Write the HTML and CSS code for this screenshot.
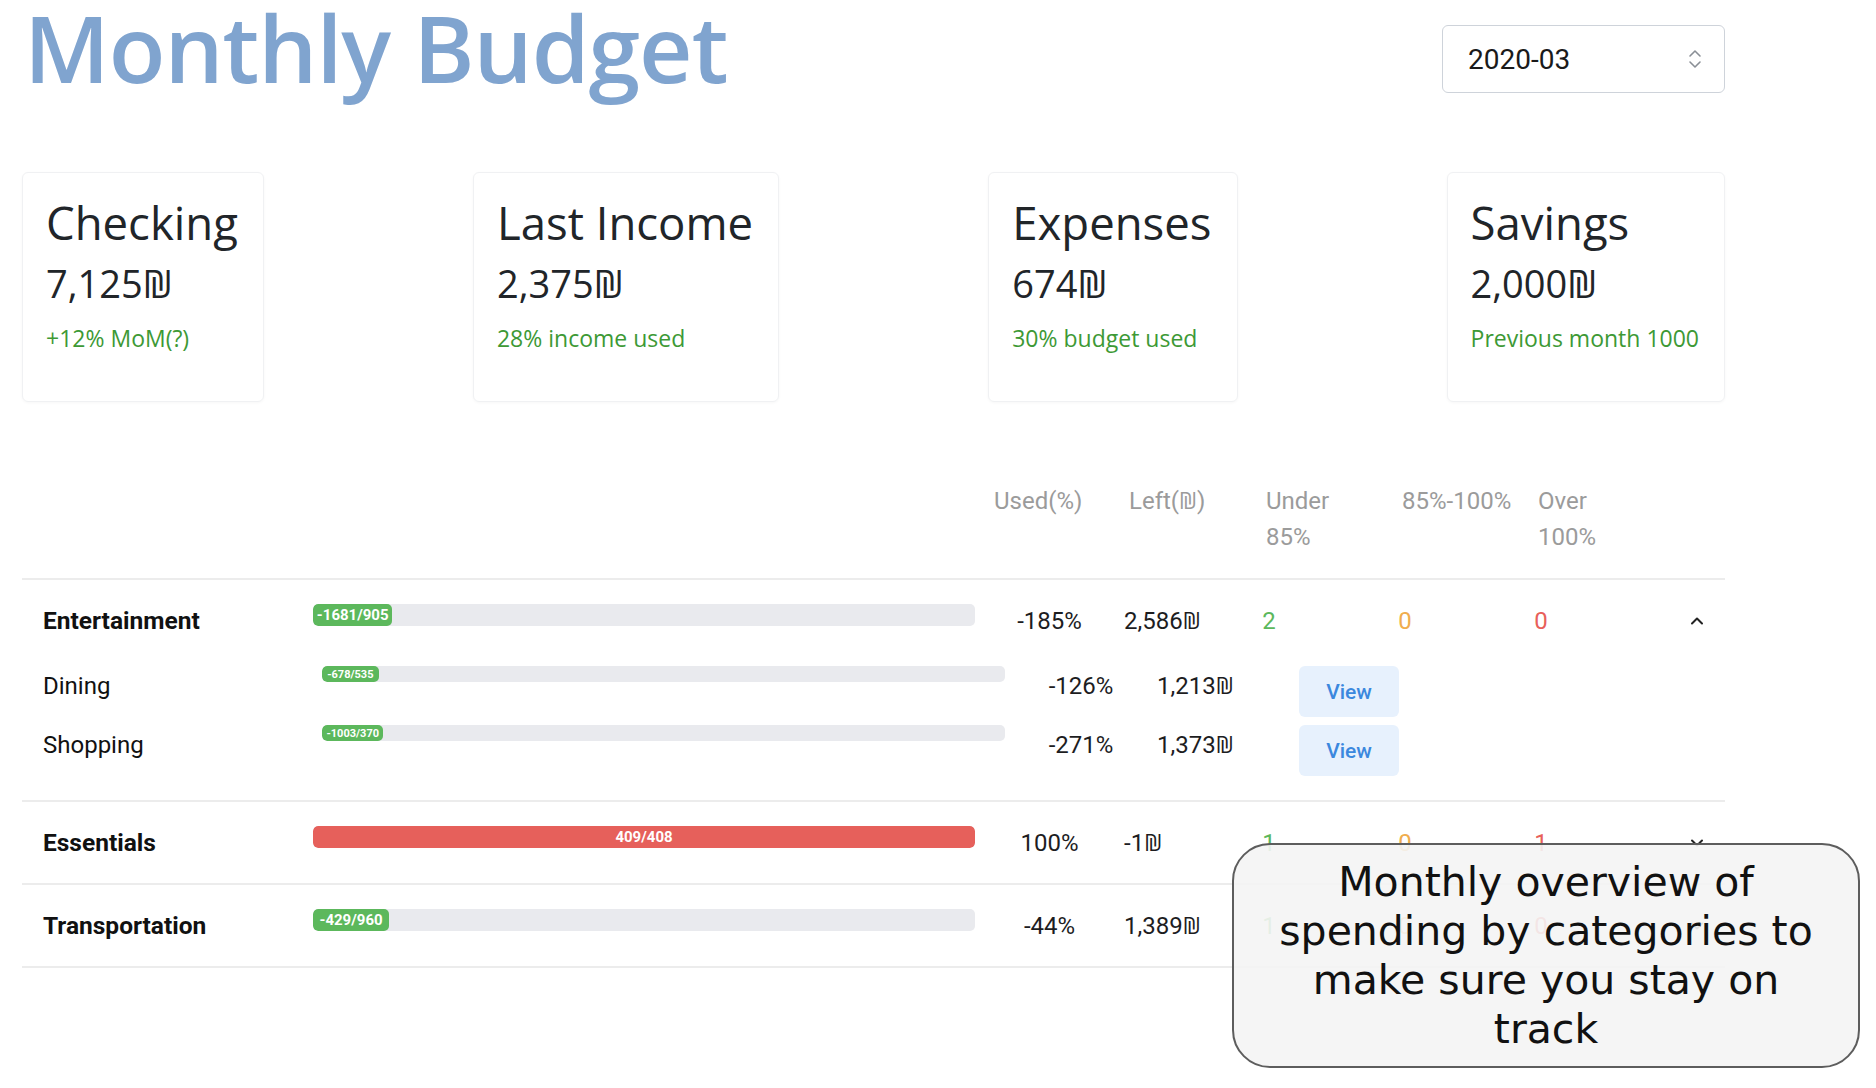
FILE: index.html
```html
<!DOCTYPE html>
<html lang="en">
<head>
<meta charset="utf-8">
<title>Monthly Budget</title>
<link rel="stylesheet" href="styles.css">
</head>
<body>
<div class="page">
  <header class="header">
    <h1 class="title">Monthly Budget</h1>
    <div class="select">
      <span class="select-value">2020-03</span>
      <svg class="select-icon" width="14" height="22" viewBox="0 0 14 22" fill="none" stroke="#8a8f96" stroke-width="1.6" stroke-linecap="round" stroke-linejoin="round"><path d="M2 8 L7 3 L12 8"/><path d="M2 14 L7 19 L12 14"/></svg>
    </div>
  </header>

  <section class="cards">
    <div class="card">
      <div class="card-title">Checking</div>
      <div class="card-value">7,125₪</div>
      <div class="card-note">+12% MoM(?)</div>
    </div>
    <div class="card">
      <div class="card-title">Last Income</div>
      <div class="card-value">2,375₪</div>
      <div class="card-note">28% income used</div>
    </div>
    <div class="card">
      <div class="card-title">Expenses</div>
      <div class="card-value">674₪</div>
      <div class="card-note">30% budget used</div>
    </div>
    <div class="card">
      <div class="card-title">Savings</div>
      <div class="card-value">2,000₪</div>
      <div class="card-note">Previous month 1000</div>
    </div>
  </section>

  <section class="table">
    <div class="row head">
      <div></div>
      <div></div>
      <div class="h-used">Used(%)</div>
      <div class="h-left">Left(<span class="sh">₪</span>)</div>
      <div class="hcell">Under<br>85%</div>
      <div class="hcell">85%-100%</div>
      <div class="hcell">Over<br>100%</div>
      <div></div>
    </div>

    <div class="group">
      <div class="row main">
        <div class="name">Entertainment</div>
        <div class="bar"><div class="fill green" style="width:12%">-1681/905</div></div>
        <div class="used">-185%</div>
        <div class="left">2,586<span class="sh">₪</span></div>
        <div class="count c-green">2</div>
        <div class="count c-orange">0</div>
        <div class="count c-red">0</div>
        <div class="chev"><svg width="16" height="10" viewBox="0 0 16 10" fill="none" stroke="#222" stroke-width="2" stroke-linecap="round" stroke-linejoin="round"><path d="M3 7.5 L8 2.5 L13 7.5"/></svg></div>
      </div>
      <div class="subs">
        <div class="subrow">
          <div class="subname">Dining</div>
          <div class="bar small"><div class="fill green" style="width:8.3%">-678/535</div></div>
          <div class="used">-126%</div>
          <div class="left">1,213<span class="sh">₪</span></div>
          <div class="view">View</div>
        </div>
        <div class="subrow">
          <div class="subname">Shopping</div>
          <div class="bar small"><div class="fill green" style="width:9%">-1003/370</div></div>
          <div class="used">-271%</div>
          <div class="left">1,373<span class="sh">₪</span></div>
          <div class="view">View</div>
        </div>
      </div>
    </div>

    <div class="group">
      <div class="row main">
        <div class="name">Essentials</div>
        <div class="bar"><div class="fill red" style="width:100%">409/408</div></div>
        <div class="used">100%</div>
        <div class="left">-1<span class="sh">₪</span></div>
        <div class="count c-green">1</div>
        <div class="count c-orange">0</div>
        <div class="count c-red">1</div>
        <div class="chev"><svg width="16" height="10" viewBox="0 0 16 10" fill="none" stroke="#222" stroke-width="2" stroke-linecap="round" stroke-linejoin="round"><path d="M3 2.5 L8 7.5 L13 2.5"/></svg></div>
      </div>
    </div>

    <div class="group">
      <div class="row main">
        <div class="name">Transportation</div>
        <div class="bar"><div class="fill green" style="width:11.5%">-429/960</div></div>
        <div class="used">-44%</div>
        <div class="left">1,389<span class="sh">₪</span></div>
        <div class="count c-green">1</div>
        <div class="count c-orange">0</div>
        <div class="count c-red">0</div>
        <div class="chev"><svg width="16" height="10" viewBox="0 0 16 10" fill="none" stroke="#222" stroke-width="2" stroke-linecap="round" stroke-linejoin="round"><path d="M3 2.5 L8 7.5 L13 2.5"/></svg></div>
      </div>
    </div>
  </section>
</div>

<div class="callout">Monthly overview of<br>spending by categories to<br>make sure you stay on<br>track</div>
</body>
</html>
```

FILE: styles.css
```css
html, body {
  margin: 0;
  padding: 0;
  background: #ffffff;
}

body {
  font-family: Roboto, "Liberation Sans", "DejaVu Sans", sans-serif;
  color: #1d1d1f;
  width: 1876px;
  height: 1088px;
  overflow: hidden;
  position: relative;
}

.page {
  width: 1703px;
  margin-left: 22px;
}

/* Header */
.header {
  display: flex;
  justify-content: space-between;
  align-items: flex-start;
}

.title {
  margin: 0 0 0 2px;
  font-family: "Open Sans", "DejaVu Sans", sans-serif;
  font-weight: 600;
  font-size: 93px;
  line-height: 94px;
  letter-spacing: -1px;
  color: #80a4cf;
}

.select {
  margin-top: 25px;
  width: 283px;
  height: 68px;
  box-sizing: border-box;
  border: 1px solid #ced3da;
  border-radius: 6px;
  display: flex;
  align-items: center;
  justify-content: space-between;
  padding: 0 22px 0 25px;
  font-size: 28px;
  color: #1a1a1a;
}

.select-icon {
  display: block;
}

/* Cards */
.cards {
  display: flex;
  justify-content: space-between;
  margin-top: 78px;
}

.card {
  height: 230px;
  box-sizing: border-box;
  padding: 22px 25px 0 23px;
  border: 1px solid #f0f1f3;
  border-radius: 6px;
  box-shadow: 0 1px 3px rgba(0, 0, 0, 0.035);
  font-family: "Open Sans", "DejaVu Sans", sans-serif;
  color: #212529;
}

.card-title {
  font-size: 45.5px;
  line-height: 54px;
}

.card-value {
  margin-top: 11px;
  font-size: 38px;
  line-height: 46px;
}

.card-note {
  margin-top: 17px;
  font-size: 23px;
  line-height: 30px;
  color: #3d9935;
}

/* Table */
.table {
  margin-top: 81px;
}

.sh {
  font-family: "Open Sans", "DejaVu Sans", sans-serif;
  font-size: 0.95em;
}

.row {
  display: grid;
  grid-template-columns: 291px 662px 149px 77px 136px 136px 136px 116px;
  font-size: 24px;
}

.head {
  color: #9b9b9b;
  line-height: 36px;
  padding-bottom: 23px;
  border-bottom: 2px solid #ececec;
}

.h-used {
  padding-left: 19px;
  white-space: nowrap;
}

.h-left {
  padding-left: 5px;
  white-space: nowrap;
}

.used {
  text-align: center;
  white-space: nowrap;
}

.left {
  text-align: left;
  white-space: nowrap;
}

.hcell {
  padding-left: 65px;
  white-space: nowrap;
}

.group {
  border-bottom: 2px solid #ececec;
}

.main {
  height: 81px;
  align-items: center;
}

.name {
  padding-left: 21px;
  font-weight: 700;
  font-size: 24.5px;
  color: #111;
}

.bar {
  align-self: start;
  margin-top: 24px;
  height: 22px;
  background: #e9eaee;
  border-radius: 5px;
  overflow: hidden;
  display: flex;
}

.bar.small {
  margin-top: 12px;
  margin-left: 9px;
  height: 16px;
}

.fill {
  height: 100%;
  display: flex;
  align-items: center;
  justify-content: center;
  color: #fff;
  font-weight: 700;
  font-size: 15px;
  white-space: nowrap;
  border-radius: 5px;
}

.bar.small .fill {
  font-size: 11px;
}

.fill.green {
  background: #5cb85c;
}

.fill.red {
  background: #e6605b;
}

.count {
  text-align: center;
}

.c-green { color: #5cb85c; }
.c-orange { color: #f0ad4e; }
.c-red { color: #e8605a; }

.chev {
  display: flex;
  justify-content: flex-end;
  padding-right: 20px;
}

.chev svg {
  display: block;
}

.subs {
  margin-top: -7px;
  padding-bottom: 28px;
}

.subrow {
  display: grid;
  grid-template-columns: 291px 692px 152px 142px 100px;
  height: 59px;
  align-items: center;
  font-size: 24px;
}

.subname {
  padding-left: 21px;
  color: #111;
}

.view {
  align-self: start;
  margin-top: 12px;
  width: 100px;
  height: 51px;
  box-sizing: border-box;
  border-radius: 6px;
  background: #e7f1fd;
  color: #3b88de;
  font-size: 21px;
  font-weight: 500;
  display: flex;
  align-items: center;
  justify-content: center;
}

/* Callout */
.callout {
  position: absolute;
  left: 1232px;
  top: 843px;
  width: 628px;
  height: 225px;
  box-sizing: border-box;
  border: 2px solid #5d5d5d;
  border-radius: 38px;
  background: rgba(244, 244, 244, 0.9);
  display: flex;
  align-items: center;
  justify-content: center;
  text-align: center;
  font-family: "DejaVu Sans", "Open Sans", sans-serif;
  font-weight: 400;
  font-size: 41px;
  line-height: 49px;
  color: #111;
}
```
